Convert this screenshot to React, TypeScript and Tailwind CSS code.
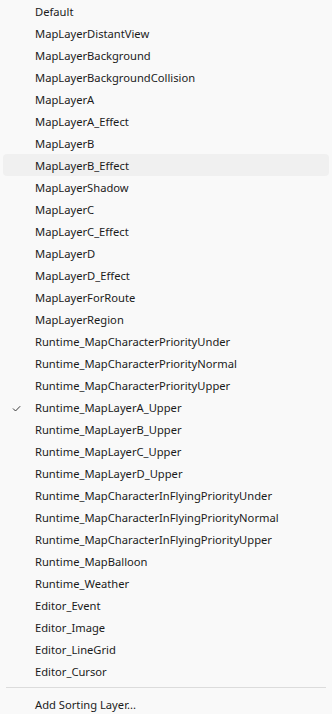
const LAYERS = [
  "Default",
  "MapLayerDistantView",
  "MapLayerBackground",
  "MapLayerBackgroundCollision",
  "MapLayerA",
  "MapLayerA_Effect",
  "MapLayerB",
  "MapLayerB_Effect",
  "MapLayerShadow",
  "MapLayerC",
  "MapLayerC_Effect",
  "MapLayerD",
  "MapLayerD_Effect",
  "MapLayerForRoute",
  "MapLayerRegion",
  "Runtime_MapCharacterPriorityUnder",
  "Runtime_MapCharacterPriorityNormal",
  "Runtime_MapCharacterPriorityUpper",
  "Runtime_MapLayerA_Upper",
  "Runtime_MapLayerB_Upper",
  "Runtime_MapLayerC_Upper",
  "Runtime_MapLayerD_Upper",
  "Runtime_MapCharacterInFlyingPriorityUnder",
  "Runtime_MapCharacterInFlyingPriorityNormal",
  "Runtime_MapCharacterInFlyingPriorityUpper",
  "Runtime_MapBalloon",
  "Runtime_Weather",
  "Editor_Event",
  "Editor_Image",
  "Editor_LineGrid",
  "Editor_Cursor",
];

const CHECKED = "Runtime_MapLayerA_Upper";
const HOVERED = "MapLayerB_Effect";

function Check() {
  return (
    <svg width="12" height="12" viewBox="0 0 12 12" fill="none">
      <path d="M4 7.5 L6.5 10 L11.2 5.2" stroke="#3a3a3a" strokeWidth="1" />
    </svg>
  );
}

export default function App() {
  return (
    <div className="w-[332px] h-[714px] bg-[#f9f9f9] text-[11.2px] text-[#1b1b1b] font-['Noto_Sans',sans-serif] overflow-hidden">
      <ul className="px-[3px]">
        {LAYERS.map((name) => (
          <li
            key={name}
            className={`flex items-center h-[22px] rounded-[4px] ${name === HOVERED ? "bg-[#f0f0f0]" : ""}`}
          >
            <span className="w-[32px] flex items-center pl-[6px]">{name === CHECKED && <Check />}</span>
            <span className="leading-none pt-[2px]">{name}</span>
          </li>
        ))}
      </ul>
      <div className="py-[5px] px-[6px]">
        <div className="h-px bg-[#dcdcdc]" />
      </div>
      <div className="px-[3px]">
        <div className="flex items-center h-[22px]">
          <span className="w-[32px]" />
          <span className="leading-none pt-[2px]">Add Sorting Layer...</span>
        </div>
      </div>
    </div>
  );
}
